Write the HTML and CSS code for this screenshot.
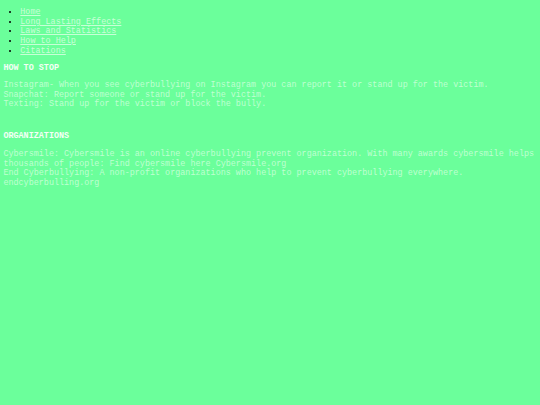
FILE: index.html
```html
<!DOCTYPE html>
<html lang="en">
<head>
<meta charset="utf-8">
<title>How to Help</title>
<link rel="stylesheet" href="styles.css">
</head>
<body>
<ul class="nav">
  <li><a href="#">Home</a></li>
  <li><a href="#">Long Lasting Effects</a></li>
  <li><a href="#">Laws and Statistics</a></li>
  <li><a href="#">How to Help</a></li>
  <li><a href="#">Citations</a></li>
</ul>
<h4 class="heading">HOW TO STOP</h4>
<p class="text">Instagram- When you see cyberbullying on Instagram you can report it or stand up for the victim.<br>Snapchat: Report someone or stand up for the victim.<br>Texting: Stand up for the victim or block the bully.</p>
<h4 class="heading heading-orgs">ORGANIZATIONS</h4>
<p class="text text-orgs">Cybersmile: Cybersmile is an online cyberbullying prevent organization. With many awards cybersmile helps thousands of people: Find cybersmile here Cybersmile.org<br>End Cyberbullying: A non-profit organizations who help to prevent cyberbullying everywhere. endcyberbulling.org</p>
</body>
</html>
```
FILE: styles.css
```css
html {
  background: #6bff9b;
}
body {
  margin: 0;
  padding: 0 3.4px;
  font-family: "Liberation Mono", "Courier New", monospace;
  font-size: 8.4375px;
  line-height: 9.7px;
  color: #bfffd1;
}
.nav {
  margin: 7.9px 0 0;
  padding-left: 16.9px;
  color: #000;
}
.nav a {
  color: #c8ffd7;
  text-decoration: underline;
}
.heading {
  margin: 7.2px 0 0;
  font-size: 8.4375px;
  font-weight: bold;
  color: #f4fff6;
}
.heading-orgs {
  margin-top: 22.3px;
}
.text {
  margin: 7.6px 0 0;
}
.text-orgs {
  margin-top: 7.9px;
}
```
